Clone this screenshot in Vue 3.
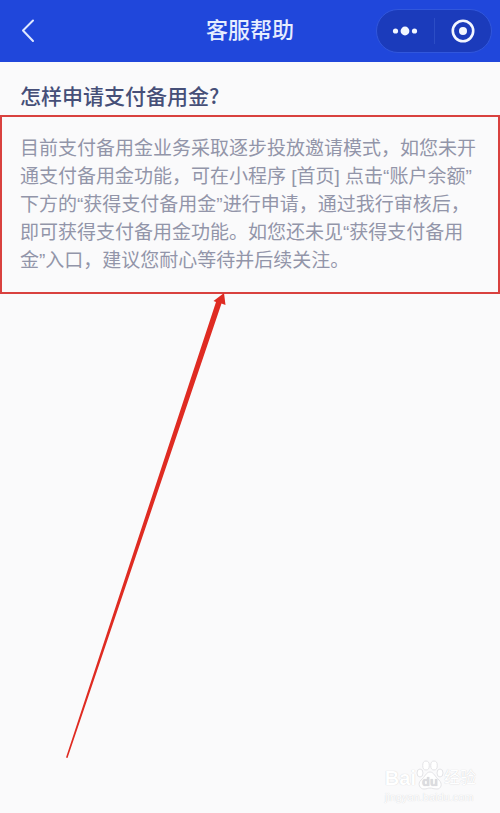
<script setup>
const title = '客服帮助'
const question = '怎样申请支付备用金?'
const answer = [
  '目前支付备用金业务采取逐步投放邀请模式，如您未开',
  '通支付备用金功能，可在小程序 [首页] 点击“账户余额”',
  '下方的“获得支付备用金”进行申请，通过我行审核后，',
  '即可获得支付备用金功能。如您还未见“获得支付备用',
  '金”入口，建议您耐心等待并后续关注。',
]
</script>

<template>
  <div class="page">
    <header class="bar">
      <button class="back" type="button" aria-label="返回">
        <svg width="16" height="26" viewBox="0 0 16 26">
          <path d="M13 2.5 L3 12.5 L13 23" fill="none" stroke="#dfe8ff" stroke-width="2" stroke-linecap="round" stroke-linejoin="round" />
        </svg>
      </button>
      <h1 class="bar-title">{{ title }}</h1>
      <div class="capsule">
        <button class="cap-btn" type="button" aria-label="更多">
          <svg width="26" height="12" viewBox="0 0 26 12">
            <circle cx="3.5" cy="6" r="2.6" />
            <circle cx="13" cy="6" r="4.4" />
            <circle cx="22.5" cy="6" r="2.6" />
          </svg>
        </button>
        <span class="divider"></span>
        <button class="cap-btn" type="button" aria-label="关闭">
          <svg width="24" height="24" viewBox="0 0 24 24">
            <circle cx="12" cy="12" r="10.2" fill="none" stroke="#f2f6ff" stroke-width="2.6" />
            <circle cx="12" cy="12" r="4" />
          </svg>
        </button>
      </div>
    </header>

    <main class="content">
      <h2 class="question">{{ question }}</h2>
      <p class="answer">
        <template v-for="(line, i) in answer" :key="i">{{ line }}<br v-if="i < answer.length - 1" /></template>
      </p>
    </main>

    <svg class="arrow" width="162" height="468" viewBox="0 0 162 468" aria-hidden="true">
      <path d="M158 1 L159.5 13 L155.5 11.5 L1.5 466 L0 465.5 L150 10 L147.5 9 Z" fill="#df2b22" />
    </svg>

    <div class="watermark">
      <div class="brand">
        <span>Bai</span>
        <svg class="paw" width="28" height="30" viewBox="0 0 28 30">
          <ellipse cx="4" cy="13" rx="3" ry="4" />
          <ellipse cx="10" cy="5.5" rx="3.3" ry="4.5" />
          <ellipse cx="18" cy="5.5" rx="3.3" ry="4.5" />
          <ellipse cx="24" cy="13" rx="3" ry="4" />
          <path d="M14 12 C10 12 9 17 5 20 C1 24 4 29 8 29 C11 29 12 28 14 28 C16 28 18 29 21 29 C25 29 27 24 23 20 C19 17 18 12 14 12 Z" />
          <text x="14" y="26" text-anchor="middle">du</text>
        </svg>
        <span class="brand-cn">经验</span>
      </div>
      <div class="site">jingyan.baidu.com</div>
    </div>
  </div>
</template>

<style>
body {
  background: #fafafb;
}
</style>

<style scoped>
.page {
  position: relative;
  min-height: 100vh;
  overflow: hidden;
  background: #fafafb;
  font-family: "Liberation Sans", "Noto Sans CJK SC", sans-serif;
}
.bar {
  display: grid;
  grid-template-columns: 1fr auto 1fr;
  align-items: center;
  height: 62px;
  padding: 0 8px;
  box-sizing: border-box;
  background: #2047db;
}
button {
  display: flex;
  align-items: center;
  justify-content: center;
  padding: 0;
  border: 0;
  background: none;
}
.back {
  justify-self: start;
  padding: 0 12px;
}
.bar-title {
  margin: 0;
  padding-bottom: 6px;
  color: #e6edff;
  font-size: 22px;
  line-height: 32px;
  font-weight: 500;
  font-family: "Noto Sans CJK SC", sans-serif;
}
.capsule {
  justify-self: end;
  display: flex;
  align-items: center;
  width: 116px;
  height: 44px;
  box-sizing: border-box;
  border: 1px solid #3157dc;
  border-radius: 22px;
  background: #1b3bbb;
}
.cap-btn {
  flex: 1;
  height: 100%;
}
.cap-btn svg {
  fill: #f2f6ff;
}
.divider {
  width: 1px;
  height: 26px;
  background: #2c4dc5;
}
.question {
  margin: 0;
  padding: 17px 20px 4px;
  color: #464f78;
  font-size: 21px;
  line-height: 32px;
  font-weight: 500;
  font-family: "Noto Sans CJK SC", sans-serif;
}
.answer {
  margin: 0;
  padding: 18px 0 17px 18px;
  border: 2px solid #d9413f;
  color: #9295a9;
  font-size: 19px;
  line-height: 28px;
  white-space: nowrap;
}
.arrow {
  position: absolute;
  left: 66px;
  top: 292px;
}
.watermark {
  position: absolute;
  right: 24px;
  bottom: 9px;
  color: #fff;
  text-shadow: 0 0 1px #c8c8cc;
}
.brand {
  display: flex;
  align-items: flex-end;
  font-size: 20px;
  line-height: 24px;
  font-weight: 700;
}
.brand-cn {
  font-size: 16px;
  font-weight: 400;
}
.paw {
  fill: #fff;
  stroke: #e4e4e7;
  stroke-width: 1;
}
.paw text {
  fill: #dcdce0;
  stroke: none;
  font-size: 13px;
}
.site {
  font-size: 11px;
  line-height: 14px;
}
</style>
